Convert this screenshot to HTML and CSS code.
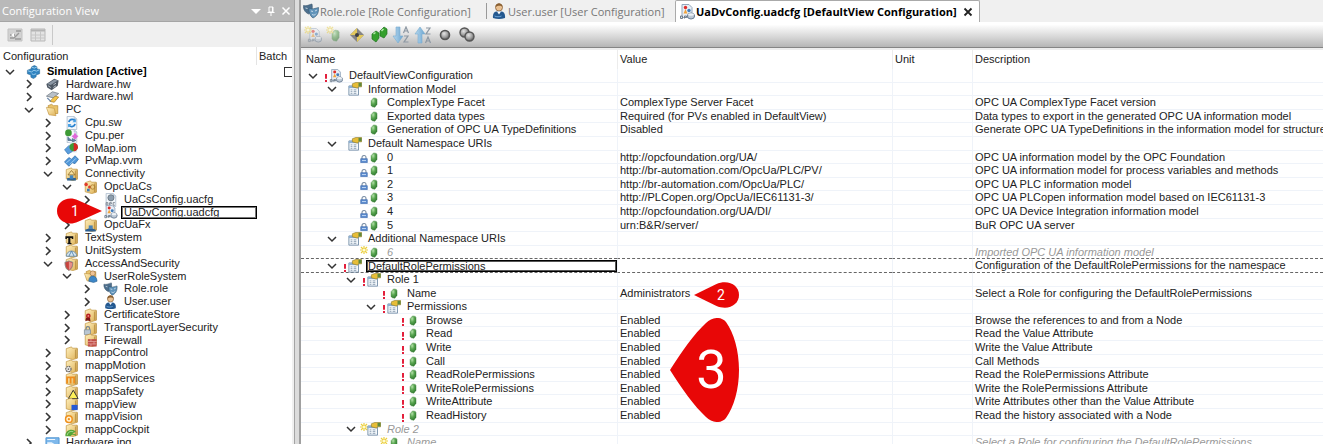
FILE: index.html
```html
<!DOCTYPE html>
<html lang="en">
<head>
<meta charset="utf-8">
<title>UaDvConfig.uadcfg [DefaultView Configuration]</title>
<link rel="stylesheet" href="styles.css">
</head>
<body>
<svg class="sprite" aria-hidden="true">
  <defs>
    <linearGradient id="gold" x1="0" y1="0" x2="1" y2="1"><stop offset="0" stop-color="#fff0bd"/><stop offset="1" stop-color="#dfb35a"/></linearGradient>
    <radialGradient id="green" cx=".35" cy=".3" r=".8"><stop offset="0" stop-color="#b4e0aa"/><stop offset=".45" stop-color="#58a64f"/><stop offset="1" stop-color="#286e2a"/></radialGradient>
    <radialGradient id="ball" cx=".4" cy=".35" r=".7"><stop offset="0" stop-color="#e4e4e4"/><stop offset=".55" stop-color="#a2a2a2"/><stop offset="1" stop-color="#555"/></radialGradient>
    <linearGradient id="arrow" x1="0" y1="0" x2="1" y2="0"><stop offset="0" stop-color="#b8daf0"/><stop offset="1" stop-color="#6ba4cf"/></linearGradient>
    <symbol id="down" viewBox="0 0 10 10"><path d="M1 3l4 4 4-4" fill="none" stroke="#333" stroke-width="1.5"/></symbol>
    <symbol id="right" viewBox="0 0 10 10"><path d="M3 1l4 4-4 4" fill="none" stroke="#333" stroke-width="1.6"/></symbol>
    <symbol id="folder" viewBox="0 0 16 16"><path d="M2 3l6-2 1 1.500h5.500V14l-5 1.500L2 13.500z" fill="url(#gold)" stroke="#c0933e" stroke-width=".8"/><path d="M12.500 4v10M14.500 3v11" stroke="#b48a3a" stroke-width=".9"/></symbol>
    <symbol id="open" viewBox="0 0 16 16"><path d="M3 3l4-1.500 2 1.500h5v9H4z" fill="#e9c36b" stroke="#b78b35" stroke-width=".8"/><path d="M1 5l9 1 2 8.500-8-1z" fill="url(#gold)" stroke="#c0933e" stroke-width=".7"/></symbol>
    <symbol id="cubes" viewBox="0 0 16 16"><path d="M6 2l3-1.500L12 2v2.500l3 .500v5l-4 1.500v2L8 15.500 5 14v-2.500L1 10V6l4-1.500z" fill="#2f83c0" stroke="#25628f" stroke-width=".6"/><path d="M6 2.500l3 1 3-1.300M1.500 6.500l4 1.500 3-2 3 1 3-1.500M6 10l2 1 3-1" stroke="#a4d4f1" fill="none"/></symbol>
    <symbol id="hw" viewBox="0 0 16 16"><path d="M1 8l9-6 5 2-1 6-7 5-5-3z" fill="#4d5763"/><path d="M2 8l8-5 4 1-8 5z" fill="#8b97a5"/><path d="M3 10l3 2M9 9l3-2M9 12l3-2" stroke="#c7cfd8"/></symbol>
    <symbol id="hwl" viewBox="0 0 16 16"><path d="M1 7l7-5 7 2-6 5z" fill="#b8c0c9" stroke="#6b7580" stroke-width=".8"/><path d="M5 13l6-6 4 1-5 6z" fill="#f5c64d" stroke="#a47823" stroke-width=".8"/><path d="M2 9l4 4" stroke="#6783a6" stroke-width="1.500"/></symbol>
    <symbol id="page" viewBox="0 0 16 16"><path d="M3 .5h8l3 3v12H3z" fill="#f3f7fb" stroke="#aab9cb" stroke-width=".9"/><path d="M11 .5v3h3" fill="#cfdcea" stroke="#aab9cb" stroke-width=".7"/></symbol>
    <symbol id="sw" viewBox="0 0 16 16"><use href="#page"/><path d="M5 7c1-4 6-4 7-1M12 9c-1 4-6 4-7 1" fill="none" stroke="#2781d0" stroke-width="2"/><path d="M13 3v4H9zM4 13V9h4z" fill="#4ba4e7"/></symbol>
    <symbol id="per" viewBox="0 0 16 16"><use href="#page"/><circle cx="4.500" cy="4.500" r="3.800" fill="#3e9a35"/><path d="M12 4l2 3 2 1-2 2-2 2-2-2-2-2 2-1z" fill="#df68d8"/><path d="M4 9v4h5M9 11l4 2-4 2z" stroke="#55738e" fill="#6788aa"/></symbol>
    <symbol id="iom" viewBox="0 0 16 16"><path d="M6 1h8v12H6z" fill="#dbe6f0"/><path d="M0 10l5-5 4 2v5l-5 3z" fill="#5a9ddd" stroke="#2c6ba8" stroke-width=".6"/><circle cx="10.500" cy="7" r="4.800" fill="#3e9a35"/><path d="M10.500 2.200a4.800 4.800 0 010 9.600z" fill="#d72626"/></symbol>
    <symbol id="vvm" viewBox="0 0 16 16"><path d="M0 9l5-5 3 2 4-4 4 4-4 5-3-1-4 4z" fill="#4f96d8" stroke="#2f6ca8" stroke-width=".8"/><path d="M2 10l5-4M6 12l7-7" stroke="#afd6f5"/></symbol>
    <symbol id="f-net" viewBox="0 0 16 16"><use href="#folder"/><path d="M4 9l4-5 4 5z" fill="#f6e1a0" stroke="#96722e"/><path d="M3 12.500h10v3H3z" fill="#2f6595"/><path d="M6 9.500h4v4H6z" fill="#4386bd"/></symbol>
    <symbol id="f-opc" viewBox="0 0 16 16"><use href="#folder"/><circle cx="3" cy="5" r="2" fill="#e03a2b"/><circle cx="7" cy="8" r="1.800" fill="#e03a2b"/><path d="M4 10h3v3H4z" fill="#3c79b8"/><circle cx="10.500" cy="8" r="2.500" fill="none" stroke="#ad8130"/></symbol>
    <symbol id="f-fx" viewBox="0 0 16 16"><use href="#folder"/><path d="M2 15.500v-2l4-1.500h4l4 1.500v2z" fill="#2c5f91"/><path d="M6 8.500h4.500v4H6z" fill="#4a82b5"/></symbol>
    <symbol id="cs" viewBox="0 0 16 16"><use href="#page"/><circle cx="8.500" cy="5.500" r="3.500" fill="#8c9dad" stroke="#66747f"/><path d="M3 11h2v3H3zM7 14v-3h2v1.500H7M13 11h-2v3h2" stroke="#757f89" fill="none"/></symbol>
    <symbol id="dv" viewBox="0 0 16 16"><path d="M3 .5h7l3 3v10H3z" fill="#e8eef5" stroke="#93a6bc"/><circle cx="6.500" cy="3.500" r="1.700" fill="#df2c29"/><path d="M4.500 9.500l2-4.500 2 4.500z" fill="#f1a33c"/><circle cx="10" cy="6.500" r="1.700" fill="#437db9"/><ellipse cx="12" cy="12" rx="3.600" ry="3" fill="#bcc8d5" stroke="#6a7d92"/><ellipse cx="12" cy="10.500" rx="3" ry="1.300" fill="#eef2f6"/><path d="M1.500 12h2v2.500h-2zM5.500 14.500V12h2v1.300h-2" stroke="#6f7d8a" fill="none"/></symbol>
    <symbol id="f-text" viewBox="0 0 16 16"><use href="#folder"/><path d="M1 6h9v3H8.500L8 8H6.700v5.500l1.300.5v1H3.300v-1l1-.5V8H3l-.500 1H1z" fill="#111"/></symbol>
    <symbol id="f-unit" viewBox="0 0 16 16"><use href="#folder"/><path d="M2 14a6 6 0 0112 0z" fill="#d4e4ee" stroke="#6e8aa0"/><path d="M5 14l3-6 3 6" fill="none" stroke="#4f83b0"/></symbol>
    <symbol id="f-sec" viewBox="0 0 16 16"><use href="#folder"/><path d="M.5 6l4.500-1.500L9.500 6c0 5-1 7-4.500 9.500C1.500 13 .5 11 .5 6z" fill="#c9433d" stroke="#8d8d8d"/><path d="M5 5.500V15C8.300 12 8.800 10 8.800 6.800z" fill="#e6908b"/></symbol>
    <symbol id="f-user" viewBox="0 0 16 16"><use href="#open"/><circle cx="10.500" cy="5" r="2.900" fill="#efc394" stroke="#8a5d30" stroke-width=".6"/><path d="M6 14c0-4 2-6 4.500-6s5 2 5 6l-4 1.500z" fill="#3d86c6" stroke="#275a88" stroke-width=".6"/></symbol>
    <symbol id="role" viewBox="0 0 16 16"><path d="M.5 2.500C4 3.500 6 1.500 9 1c1 5-.5 8-3.500 10C2 9.500 0 6 .5 2.500z" fill="#4d6f8d" stroke="#39546c" stroke-width=".6"/><path d="M6 5c3 1.500 6 .5 9.500-.5.5 6-2 9-5.500 10.500C7 13 5.500 9 6 5z" fill="#6194ba" stroke="#345570" stroke-width=".6"/><path d="M2.500 5l2 .5M8 8l2 .5M12 8l2-1M9 11.500c2 1 3 .5 4-.8" stroke="#dfeaf3" stroke-width=".8" fill="none"/></symbol>
    <symbol id="user" viewBox="0 0 16 16"><circle cx="8" cy="4.500" r="3.500" fill="#eac192" stroke="#7b522b" stroke-width=".7"/><path d="M4.500 4c0-5 7-5 7 0-2-2-5-1-7 0z" fill="#8a6032"/><path d="M2 15c-.5-4 1-6.500 4-6.500h4c3 0 4.500 2.500 4 6.500-4 1.300-8 1.300-12 0z" fill="#24588f"/><path d="M6 8.500l2 3 2-3z" fill="#fff"/><path d="M3.500 13c2 1 5 1 7 0" stroke="#6ba3d6" fill="none"/></symbol>
    <symbol id="f-cert" viewBox="0 0 16 16"><use href="#folder"/><circle cx="5.500" cy="9" r="2.700" fill="#b82020"/><path d="M3 11l-1 4 3-1 3 1.500-.5-4z" fill="#7d1717"/><circle cx="5.500" cy="9" r="1" fill="#ef8d83"/></symbol>
    <symbol id="f-tls" viewBox="0 0 16 16"><use href="#folder"/><path d="M3 10V8.500a2 2 0 014 0V10" fill="none" stroke="#75808a" stroke-width="1.300"/><path d="M1 10h7v5.500H1z" fill="#b9c6d2" stroke="#7b8995" stroke-width=".8"/></symbol>
    <symbol id="f-fire" viewBox="0 0 16 16"><use href="#folder"/><path d="M5 7h10v8.500H5z" fill="#c0504a"/><path d="M5 9.700h10M5 12.500h10M8.500 7v3M12 10v3M8.500 12.500v3" stroke="#e8aaa4" stroke-width=".8"/></symbol>
    <symbol id="f-motion" viewBox="0 0 16 16"><use href="#folder"/><circle cx="4.500" cy="11.500" r="3" fill="#eee" stroke="#666" stroke-width="1.400" stroke-dasharray="2 .8"/><circle cx="4.500" cy="11.500" r="1" fill="#666"/></symbol>
    <symbol id="f-serv" viewBox="0 0 16 16"><use href="#folder"/><path d="M3 13V6h8v7M7 6v7" fill="none" stroke="#ef8d1d" stroke-width="2"/></symbol>
    <symbol id="f-safe" viewBox="0 0 16 16"><use href="#folder"/><path d="M10 6l5.500 9.500h-11z" fill="#fff159" stroke="#333" stroke-width="1.100"/></symbol>
    <symbol id="f-view" viewBox="0 0 16 16"><use href="#folder"/><path d="M8 9h7v6H8z" fill="#2559d5"/></symbol>
    <symbol id="f-vis" viewBox="0 0 16 16"><use href="#folder"/><circle cx="5" cy="10.500" r="3.800" fill="#fff2d5" stroke="#ef911d" stroke-width="1.700"/><circle cx="5" cy="10.500" r="1.300" fill="#ef911d"/></symbol>
    <symbol id="f-cock" viewBox="0 0 16 16"><use href="#folder"/><path d="M1 15c0-8 9-9 12-5l-4 2 4 1v2c-2-2-5-2-6 0z" fill="#54a537"/><path d="M3 14c1-4 4-5 7-4" fill="none" stroke="#bde5a9"/></symbol>
    <symbol id="jpg" viewBox="0 0 16 16"><path d="M.5 2h15v12H.5z" fill="#7eb8eb" stroke="#4a91d0"/><path d="M2 7l5 0 6 4-11 2z" fill="#eaf5ff"/><path d="M2 4h9" stroke="#fff"/></symbol>
    <symbol id="group" viewBox="0 0 16 16"><path d="M1 4.500h11V15H1z" fill="#f4f8fc" stroke="#718ba6"/><path d="M1 4.500h11V7H1z" fill="#8fb0d2"/><path d="M3 9h2M3 11h2M3 13h2M6.500 9h3M6.500 11h3M6.500 13h3" stroke="#8598ac"/><path d="M5 2l4-1.500h6.500v5H12L11 7 5 5.500z" fill="#e7bd37" stroke="#8b792e" stroke-width=".7"/><path d="M12 1h3.500v4H12z" fill="#5f893e"/></symbol>
    <symbol id="pill" viewBox="0 0 8 12"><path d="M.8 4L3.500 1 6.500 1.500 7.300 3v5L5 11.200 2 10.700.8 9z" fill="url(#green)" stroke="#4c8f4a" stroke-width=".5" stroke-linejoin="round"/></symbol>
    <symbol id="lock" viewBox="0 0 8 8"><path d="M2 4V2.500a2 2 0 014 0V4" fill="none" stroke="#8496ab" stroke-width="1.200"/><path d="M.7 3.700h6.600v4H.7z" fill="#5c8ccf" stroke="#3b68aa" stroke-width=".6"/><path d="M2 5.500h4" stroke="#b9d2f0"/></symbol>
    <symbol id="bang" viewBox="0 0 8 8"><path d="M3 0h2v4.700H3zM3 6h2v2H3z" fill="#e3203c"/></symbol>
    <symbol id="star" viewBox="0 0 8 8"><path d="M4 0v8M0 4h8M1 1l6 6M7 1L1 7" stroke="#ebcf3e" stroke-width="1.200"/><circle cx="4" cy="4" r="1.500" fill="#fffbd0"/></symbol>
    <symbol id="t-adddv" viewBox="0 0 18 18"><use href="#dv" x="3" y="2" width="15" height="15"/><use href="#star" width="8" height="8"/></symbol>
    <symbol id="t-addpill" viewBox="0 0 18 18"><use href="#pill" x="5" y="3" width="9" height="13"/><use href="#star" width="8" height="8"/></symbol>
    <symbol id="t-diamond" viewBox="0 0 18 18"><path d="M9 2l7 7-7 7-7-7z" fill="#858585"/><path d="M9 2v7H2zM9 9h7l-7 7z" fill="#e3c95c"/><circle cx="9" cy="9" r="2" fill="#3e3e3e"/></symbol>
    <symbol id="t-pills" viewBox="0 0 18 18"><path d="M2 8l4-3 3 2v5l-3 4-4-3zM10 5l4-4 3 2v5l-3 4-4-2z" fill="#35a02d" stroke="#20731f" stroke-width=".7"/><path d="M3.500 8l2-1.500M11.500 5l2-2" stroke="#b6e8ac" stroke-width="1.500"/></symbol>
    <symbol id="t-down" viewBox="0 0 18 18"><path d="M4 1h4v9h3l-5 7-5-7h3z" fill="url(#arrow)" stroke="#79acd0" stroke-width=".6"/><path d="M11.500 7L14 1l2.500 6M12.300 5h3.400M12 10h4l-4 6h4.500" fill="none" stroke="#8d98a3" stroke-width="1.200"/></symbol>
    <symbol id="t-up" viewBox="0 0 18 18"><path d="M4 17h4V8h3L6 1 1 8h3z" fill="url(#arrow)" stroke="#79acd0" stroke-width=".6"/><path d="M12 2h4l-4 6h4.500M11.500 17l2.500-6 2.500 6M12.300 15h3.400" fill="none" stroke="#8d98a3" stroke-width="1.200"/></symbol>
    <symbol id="t-ball" viewBox="0 0 18 18"><circle cx="9" cy="9" r="4.500" fill="url(#ball)" stroke="#555" stroke-width="1.600"/></symbol>
    <symbol id="t-balls" viewBox="0 0 18 18"><circle cx="6.500" cy="6.500" r="4.500" fill="url(#ball)" stroke="#555" stroke-width="1.400"/><circle cx="11.500" cy="10.500" r="4.500" fill="url(#ball)" stroke="#555" stroke-width="1.400"/></symbol>
    <symbol id="t-tree" viewBox="0 0 18 18"><path d="M2 3h14v12H2z" fill="#d2d2d2" stroke="#c1c1c1"/><path d="M4 12h4l5-5M9 13h6M4 9h5M10 5h5" stroke="#999" stroke-width="1.300" fill="none"/><path d="M5 9l3-2v4z" fill="#fff"/></symbol>
    <symbol id="t-grid" viewBox="0 0 18 18"><path d="M2 3h14v12H2z" fill="#e3e3e3" stroke="#b7b7b7"/><path d="M2 4.500h14" stroke="#b4b4b4" stroke-width="2"/><path d="M2 9h14M2 12h14M6.500 5v10M11.500 5v10" stroke="#c6c6c6"/></symbol>
  </defs>
</svg>

<div class="workbench">
  <section class="side">
    <header class="side-title">
      <h1>Configuration View</h1>
      <button aria-label="Menu"><svg viewBox="0 0 10 10"><path d="M0 3h10L5 8z" fill="#fff"/></svg></button>
      <button aria-label="Pin"><svg viewBox="0 0 10 10"><path d="M3 1h4v5H3zM1.500 6.500h7M5 7v3M6.500 1v5" fill="none" stroke="#fff"/></svg></button>
      <button aria-label="Close"><svg viewBox="0 0 10 10"><path d="M1.500 1.500l7 7M8.500 1.500l-7 7" stroke="#fff" stroke-width="1.500"/></svg></button>
    </header>
    <div class="side-tools">
      <button aria-label="Tree view"><svg><use href="#t-tree"/></svg></button>
      <button aria-label="Table view"><svg><use href="#t-grid"/></svg></button>
    </div>
    <div class="side-head"><span>Configuration</span><label for="batch">Batch</label></div>
    <ul class="tree">
      <li class="l0"><button aria-label="Collapse"><svg><use href="#down"/></svg></button><svg class="ico"><use href="#cubes"/></svg><b>Simulation [Active]</b><input type="checkbox" id="batch"></li>
      <li class="l1"><button aria-label="Expand"><svg><use href="#right"/></svg></button><svg class="ico"><use href="#hw"/></svg><span>Hardware.hw</span></li>
      <li class="l1"><button aria-label="Expand"><svg><use href="#right"/></svg></button><svg class="ico"><use href="#hwl"/></svg><span>Hardware.hwl</span></li>
      <li class="l1"><button aria-label="Collapse"><svg><use href="#down"/></svg></button><svg class="ico"><use href="#open"/></svg><span>PC</span></li>
      <li class="l2"><button aria-label="Expand"><svg><use href="#right"/></svg></button><svg class="ico"><use href="#sw"/></svg><span>Cpu.sw</span></li>
      <li class="l2"><button aria-label="Expand"><svg><use href="#right"/></svg></button><svg class="ico"><use href="#per"/></svg><span>Cpu.per</span></li>
      <li class="l2"><button aria-label="Expand"><svg><use href="#right"/></svg></button><svg class="ico"><use href="#iom"/></svg><span>IoMap.iom</span></li>
      <li class="l2"><button aria-label="Expand"><svg><use href="#right"/></svg></button><svg class="ico"><use href="#vvm"/></svg><span>PvMap.vvm</span></li>
      <li class="l2"><button aria-label="Collapse"><svg><use href="#down"/></svg></button><svg class="ico"><use href="#f-net"/></svg><span>Connectivity</span></li>
      <li class="l3"><button aria-label="Collapse"><svg><use href="#down"/></svg></button><svg class="ico"><use href="#f-opc"/></svg><span>OpcUaCs</span></li>
      <li class="l4"><button aria-label="Expand"><svg><use href="#right"/></svg></button><svg class="ico"><use href="#cs"/></svg><span>UaCsConfig.uacfg</span></li>
      <li class="l4"><i class="gap"></i><svg class="ico"><use href="#dv"/></svg><span class="picked">UaDvConfig.uadcfg</span></li>
      <li class="l3"><button aria-label="Expand"><svg><use href="#right"/></svg></button><svg class="ico"><use href="#f-fx"/></svg><span>OpcUaFx</span></li>
      <li class="l2"><button aria-label="Expand"><svg><use href="#right"/></svg></button><svg class="ico"><use href="#f-text"/></svg><span>TextSystem</span></li>
      <li class="l2"><button aria-label="Expand"><svg><use href="#right"/></svg></button><svg class="ico"><use href="#f-unit"/></svg><span>UnitSystem</span></li>
      <li class="l2"><button aria-label="Collapse"><svg><use href="#down"/></svg></button><svg class="ico"><use href="#f-sec"/></svg><span>AccessAndSecurity</span></li>
      <li class="l3"><button aria-label="Collapse"><svg><use href="#down"/></svg></button><svg class="ico"><use href="#f-user"/></svg><span>UserRoleSystem</span></li>
      <li class="l4"><button aria-label="Expand"><svg><use href="#right"/></svg></button><svg class="ico"><use href="#role"/></svg><span>Role.role</span></li>
      <li class="l4"><button aria-label="Expand"><svg><use href="#right"/></svg></button><svg class="ico"><use href="#user"/></svg><span>User.user</span></li>
      <li class="l3"><button aria-label="Expand"><svg><use href="#right"/></svg></button><svg class="ico"><use href="#f-cert"/></svg><span>CertificateStore</span></li>
      <li class="l3"><button aria-label="Expand"><svg><use href="#right"/></svg></button><svg class="ico"><use href="#f-tls"/></svg><span>TransportLayerSecurity</span></li>
      <li class="l3"><button aria-label="Expand"><svg><use href="#right"/></svg></button><svg class="ico"><use href="#f-fire"/></svg><span>Firewall</span></li>
      <li class="l2"><button aria-label="Expand"><svg><use href="#right"/></svg></button><svg class="ico"><use href="#folder"/></svg><span>mappControl</span></li>
      <li class="l2"><button aria-label="Expand"><svg><use href="#right"/></svg></button><svg class="ico"><use href="#f-motion"/></svg><span>mappMotion</span></li>
      <li class="l2"><button aria-label="Expand"><svg><use href="#right"/></svg></button><svg class="ico"><use href="#f-serv"/></svg><span>mappServices</span></li>
      <li class="l2"><button aria-label="Expand"><svg><use href="#right"/></svg></button><svg class="ico"><use href="#f-safe"/></svg><span>mappSafety</span></li>
      <li class="l2"><button aria-label="Expand"><svg><use href="#right"/></svg></button><svg class="ico"><use href="#f-view"/></svg><span>mappView</span></li>
      <li class="l2"><button aria-label="Expand"><svg><use href="#right"/></svg></button><svg class="ico"><use href="#f-vis"/></svg><span>mappVision</span></li>
      <li class="l2"><button aria-label="Expand"><svg><use href="#right"/></svg></button><svg class="ico"><use href="#f-cock"/></svg><span>mappCockpit</span></li>
      <li class="l1"><button aria-label="Expand"><svg><use href="#right"/></svg></button><svg class="ico"><use href="#jpg"/></svg><span>Hardware.jpg</span></li>
    </ul>
  </section>

  <div class="splitter"></div>

  <main class="editor">
    <nav class="tabs">
      <a href="#role-tab" class="tab tab-role"><svg><use href="#role"/></svg>Role.role [Role Configuration]</a>
      <a href="#user-tab" class="tab tab-user"><svg><use href="#user"/></svg>User.user [User Configuration]</a>
      <div class="tab active"><svg><use href="#dv"/></svg><span>UaDvConfig.uadcfg [DefaultView Configuration]</span><button aria-label="Close tab"><svg viewBox="0 0 10 10"><path d="M1.500 1.500l7 7M8.500 1.500l-7 7" stroke="#222" stroke-width="1.800"/></svg></button></div>
    </nav>
    <div class="tools">
      <button class="dim" aria-label="Add configuration"><svg><use href="#t-adddv"/></svg></button>
      <button class="dim" aria-label="Add element"><svg><use href="#t-addpill"/></svg></button>
      <button aria-label="Mark"><svg><use href="#t-diamond"/></svg></button>
      <button aria-label="Elements"><svg><use href="#t-pills"/></svg></button>
      <button aria-label="Sort ascending"><svg><use href="#t-down"/></svg></button>
      <button aria-label="Sort descending"><svg><use href="#t-up"/></svg></button>
      <button aria-label="Single"><svg><use href="#t-ball"/></svg></button>
      <button aria-label="Multiple"><svg><use href="#t-balls"/></svg></button>
    </div>
    <table class="grid">
      <colgroup><col class="c-name"><col class="c-value"><col class="c-unit"><col></colgroup>
      <thead><tr><th>Name</th><th>Value</th><th>Unit</th><th>Description</th></tr></thead>
      <tbody>
        <tr><td><div class="node l0"><button aria-label="Collapse"><svg><use href="#down"/></svg></button><svg class="mark low"><use href="#bang"/></svg><svg class="ico"><use href="#dv"/></svg><span>DefaultViewConfiguration</span></div></td><td></td><td></td><td></td></tr>
        <tr><td><div class="node l1"><button aria-label="Collapse"><svg><use href="#down"/></svg></button><i class="mark"></i><svg class="ico"><use href="#group"/></svg><span>Information Model</span></div></td><td></td><td></td><td></td></tr>
        <tr><td><div class="node l2"><i class="gap"></i><i class="mark"></i><svg class="ico pill"><use href="#pill"/></svg><span>ComplexType Facet</span></div></td><td>ComplexType Server Facet</td><td></td><td>OPC UA ComplexType Facet version</td></tr>
        <tr><td><div class="node l2"><i class="gap"></i><i class="mark"></i><svg class="ico pill"><use href="#pill"/></svg><span>Exported data types</span></div></td><td>Required (for PVs enabled in DefaultView)</td><td></td><td>Data types to export in the generated OPC UA information model</td></tr>
        <tr><td><div class="node l2"><i class="gap"></i><i class="mark"></i><svg class="ico pill"><use href="#pill"/></svg><span>Generation of OPC UA TypeDefinitions</span></div></td><td>Disabled</td><td></td><td>Generate OPC UA TypeDefinitions in the information model for structured v</td></tr>
        <tr><td><div class="node l1"><button aria-label="Collapse"><svg><use href="#down"/></svg></button><i class="mark"></i><svg class="ico"><use href="#group"/></svg><span>Default Namespace URIs</span></div></td><td></td><td></td><td></td></tr>
        <tr><td><div class="node l2"><i class="gap"></i><svg class="mark low"><use href="#lock"/></svg><svg class="ico pill"><use href="#pill"/></svg><span>0</span></div></td><td>http://opcfoundation.org/UA/</td><td></td><td>OPC UA information model by the OPC Foundation</td></tr>
        <tr><td><div class="node l2"><i class="gap"></i><svg class="mark low"><use href="#lock"/></svg><svg class="ico pill"><use href="#pill"/></svg><span>1</span></div></td><td>http://br-automation.com/OpcUa/PLC/PV/</td><td></td><td>OPC UA information model for process variables and methods</td></tr>
        <tr><td><div class="node l2"><i class="gap"></i><svg class="mark low"><use href="#lock"/></svg><svg class="ico pill"><use href="#pill"/></svg><span>2</span></div></td><td>http://br-automation.com/OpcUa/PLC/</td><td></td><td>OPC UA PLC information model</td></tr>
        <tr><td><div class="node l2"><i class="gap"></i><svg class="mark low"><use href="#lock"/></svg><svg class="ico pill"><use href="#pill"/></svg><span>3</span></div></td><td>http://PLCopen.org/OpcUa/IEC61131-3/</td><td></td><td>OPC UA PLCopen information model based on IEC61131-3</td></tr>
        <tr><td><div class="node l2"><i class="gap"></i><svg class="mark low"><use href="#lock"/></svg><svg class="ico pill"><use href="#pill"/></svg><span>4</span></div></td><td>http://opcfoundation.org/UA/DI/</td><td></td><td>OPC UA Device Integration information model</td></tr>
        <tr><td><div class="node l2"><i class="gap"></i><svg class="mark low"><use href="#lock"/></svg><svg class="ico pill"><use href="#pill"/></svg><span>5</span></div></td><td>urn:B&amp;R/server/</td><td></td><td>BuR OPC UA server</td></tr>
        <tr><td><div class="node l1"><button aria-label="Collapse"><svg><use href="#down"/></svg></button><i class="mark"></i><svg class="ico"><use href="#group"/></svg><span>Additional Namespace URIs</span></div></td><td></td><td></td><td></td></tr>
        <tr class="draft"><td><div class="node l2"><i class="gap"></i><svg class="mark high"><use href="#star"/></svg><svg class="ico pill"><use href="#pill"/></svg><span>6</span></div></td><td></td><td></td><td>Imported OPC UA information model</td></tr>
        <tr class="focus"><td><div class="node l1"><button aria-label="Collapse"><svg><use href="#down"/></svg></button><svg class="mark low"><use href="#bang"/></svg><svg class="ico"><use href="#group"/></svg><span class="picked">DefaultRolePermissions</span></div></td><td></td><td></td><td>Configuration of the DefaultRolePermissions for the namespace</td></tr>
        <tr><td><div class="node l2"><button aria-label="Collapse"><svg><use href="#down"/></svg></button><svg class="mark low"><use href="#bang"/></svg><svg class="ico"><use href="#group"/></svg><span>Role 1</span></div></td><td></td><td></td><td></td></tr>
        <tr><td><div class="node l3"><i class="gap"></i><svg class="mark low"><use href="#bang"/></svg><svg class="ico pill"><use href="#pill"/></svg><span>Name</span></div></td><td>Administrators</td><td></td><td>Select a Role for configuring the DefaultRolePermissions</td></tr>
        <tr><td><div class="node l3"><button aria-label="Collapse"><svg><use href="#down"/></svg></button><svg class="mark low"><use href="#bang"/></svg><svg class="ico"><use href="#group"/></svg><span>Permissions</span></div></td><td></td><td></td><td></td></tr>
        <tr><td><div class="node l4"><i class="gap"></i><svg class="mark low"><use href="#bang"/></svg><svg class="ico pill"><use href="#pill"/></svg><span>Browse</span></div></td><td>Enabled</td><td></td><td>Browse the references to and from a Node</td></tr>
        <tr><td><div class="node l4"><i class="gap"></i><svg class="mark low"><use href="#bang"/></svg><svg class="ico pill"><use href="#pill"/></svg><span>Read</span></div></td><td>Enabled</td><td></td><td>Read the Value Attribute</td></tr>
        <tr><td><div class="node l4"><i class="gap"></i><svg class="mark low"><use href="#bang"/></svg><svg class="ico pill"><use href="#pill"/></svg><span>Write</span></div></td><td>Enabled</td><td></td><td>Write the Value Attribute</td></tr>
        <tr><td><div class="node l4"><i class="gap"></i><svg class="mark low"><use href="#bang"/></svg><svg class="ico pill"><use href="#pill"/></svg><span>Call</span></div></td><td>Enabled</td><td></td><td>Call Methods</td></tr>
        <tr><td><div class="node l4"><i class="gap"></i><svg class="mark low"><use href="#bang"/></svg><svg class="ico pill"><use href="#pill"/></svg><span>ReadRolePermissions</span></div></td><td>Enabled</td><td></td><td>Read the RolePermissions Attribute</td></tr>
        <tr><td><div class="node l4"><i class="gap"></i><svg class="mark low"><use href="#bang"/></svg><svg class="ico pill"><use href="#pill"/></svg><span>WriteRolePermissions</span></div></td><td>Enabled</td><td></td><td>Write the RolePermissions Attribute</td></tr>
        <tr><td><div class="node l4"><i class="gap"></i><svg class="mark low"><use href="#bang"/></svg><svg class="ico pill"><use href="#pill"/></svg><span>WriteAttribute</span></div></td><td>Enabled</td><td></td><td>Write Attributes other than the Value Attribute</td></tr>
        <tr><td><div class="node l4"><i class="gap"></i><svg class="mark low"><use href="#bang"/></svg><svg class="ico pill"><use href="#pill"/></svg><span>ReadHistory</span></div></td><td>Enabled</td><td></td><td>Read the history associated with a Node</td></tr>
        <tr class="draft"><td><div class="node l2"><button aria-label="Collapse"><svg><use href="#down"/></svg></button><svg class="mark high"><use href="#star"/></svg><svg class="ico"><use href="#group"/></svg><span>Role 2</span></div></td><td></td><td></td><td></td></tr>
        <tr class="draft"><td><div class="node l3"><i class="gap"></i><svg class="mark high"><use href="#star"/></svg><svg class="ico pill"><use href="#pill"/></svg><span>Name</span></div></td><td></td><td></td><td>Select a Role for configuring the DefaultRolePermissions</td></tr>
      </tbody>
    </table>
  </main>
</div>

<div class="callout one"><svg viewBox="0 0 45 26"><path d="M45 13L21 2.300C11-2.500 0 3 0 13s11 15.500 21 10.700z" fill="#e80707"/></svg><span>1</span></div>
<div class="callout two"><svg viewBox="0 0 45 26"><path d="M0 13L22 2.300C34-3 45 3 45 13s-11 16-23 10.700z" fill="#e80707"/></svg><span>2</span></div>
<div class="callout three"><svg viewBox="0 0 69 104"><path d="M0 52C12 33 24 16 36 5 42-1 51-2 56 4 64 15 69 33 69 52S64 89 56 100C51 106 42 105 36 99 24 88 12 71 0 52z" fill="#e80707"/></svg><span>3</span></div>
</body>
</html>
```
FILE: styles.css
```css
* { box-sizing: border-box; }
body {
  margin: 0;
  height: 100vh;
  overflow: hidden;
  background: #fff;
  color: #222;
  font: 11px/13px "Liberation Sans", Arial, sans-serif;
  white-space: nowrap;
}
.sprite { position: absolute; width: 0; height: 0; }
button { margin: 0; padding: 0; border: 0; background: none; display: flex; flex: none; }
svg { flex: none; display: block; }

.workbench { display: flex; height: 100%; }

/* Configuration tree */
.side { flex: none; width: 294px; display: flex; flex-direction: column; background: #f0f0f0; }
.side-title {
  display: flex; align-items: center; gap: 5px;
  height: 22px; padding: 0 3px 0 2px; flex: none;
  background: #b9b9b9; border-bottom: 1px solid #a5a5a5;
  font-family: "Open Sans", sans-serif; color: #fff;
}
.side-title h1 { margin: 0 auto 0 0; font-size: 11px; font-weight: 400; }
.side-title svg { width: 10px; height: 10px; }
.side-tools { display: flex; align-items: center; gap: 5px; height: 25px; padding-left: 6px; flex: none; }
.side-tools svg { width: 18px; height: 18px; }
.side-tools::after { content: ""; width: 1px; height: 20px; background: #c9c9c9; }
.side-head {
  display: flex; flex: none; height: 18px; line-height: 18px;
  margin-right: 2px; padding-left: 3px; background: #fff;
}
.side-head span { flex: 1; }
.side-head label { width: 36px; padding-left: 2px; border-left: 1px solid #e4e4e4; }
.tree { flex: 1; min-height: 0; overflow: hidden; list-style: none; margin: 0 2px 0 0; padding: 0; background: #fff; }
.tree li { display: flex; align-items: center; height: 13px; }
.tree li:nth-child(5n+2) { height: 12px; }
.tree button, .gap { width: 10px; height: 10px; margin-right: 11px; }
.tree button svg, .node button svg { width: 10px; height: 10px; }
.tree .ico { width: 15px; height: 14px; margin-right: 6px; }
.tree b { color: #000; }
.tree .l0 { padding-left: 5px; }
.tree .l1 { padding-left: 24px; }
.tree .l2 { padding-left: 43px; }
.tree .l3 { padding-left: 62px; }
.tree .l4 { padding-left: 82px; }
.tree .picked { width: 136px; height: 13px; line-height: 11px; margin-left: -3px; padding-left: 2px; border: 1px solid #000; outline: 1px solid #777; outline-offset: -2px; }
.tree input {
  appearance: none; width: 10px; height: 10px; margin: 0 -2px 0 auto;
  border: 1px solid #333; background: #fff;
}

.splitter { flex: none; width: 7px; background: #dcdcdc; border-left: 1px solid #a4a4a4; border-right: 2px solid #a0a0a0; }

/* Editor */
.editor { flex: 1; min-width: 0; overflow: hidden; }
.tabs {
  display: flex; height: 22px; background: #f0f0f0;
  font-family: "Open Sans", sans-serif; font-size: 11px;
}
.tab { display: flex; align-items: center; gap: 1px; color: #777; text-decoration: none; }
.tab svg { width: 16px; height: 16px; }
.tab-role { width: 185px; padding-left: 2px; }
.tab-user { width: 189px; padding-left: 4px; }
.tab-user::before { content: ""; width: 1px; height: 16px; margin-left: -4px; margin-right: 3px; background: #999; }
.tab.active {
  padding: 0 6px 0 3px; color: #000; font-weight: 700; background: #fff;
  border: 1px solid #aaa; border-bottom: 0; border-radius: 2px 2px 0 0;
}
.tab button { margin-left: 5px; }
.tab button svg { width: 10px; height: 10px; }
.tools {
  display: flex; align-items: center; gap: 4px; height: 26px; padding-left: 3px;
  background: linear-gradient(#fff 10%, #e3e3e3 45%, #b5b5b5);
  border-bottom: 1px solid #858585;
}
.tools svg { width: 18px; height: 18px; }
.tools .dim { opacity: .5; }

.grid { width: 100%; table-layout: fixed; border-collapse: separate; border-spacing: 0; border-top: 2px solid #ededed; }
.c-name { width: 316px; }
.c-value { width: 275px; }
.c-unit { width: 80px; }
.grid th { height: 19px; line-height: 19px; padding: 0 0 0 2px; text-align: left; font-weight: 400; border-left: 1px solid #ececec; }
.grid th:first-child { padding-left: 5px; border-left: 0; }
.grid td {
  height: 14px; line-height: 13px; padding: 0 0 0 2px;
  border-left: 1px solid #eff3f9; border-bottom: 1px solid #eff3f9;
}
.grid td:first-child { padding: 0; border-left: 0; }
.grid tr:nth-child(5n+2) td, .grid tr:nth-child(5n+4) td { height: 13px; line-height: 12px; }
.node { display: flex; align-items: center; height: 12px; }
.node button, .node .gap { width: 10px; height: 10px; margin-right: 4px; flex: none; }
.node .mark { width: 8px; height: 8px; flex: none; }
.node .low { align-self: flex-end; }
.node .high { align-self: flex-start; }
.node .ico { width: 14px; height: 14px; margin: 0 6px 0 -1px; }
.node .pill { height: 11px; }
.node.l0 { padding-left: 7px; }
.node.l1 { padding-left: 26px; }
.node.l2 { padding-left: 45px; }
.node.l3 { padding-left: 65px; }
.node.l4 { padding-left: 84px; }
.node .picked { flex: 1; height: 12px; line-height: 10px; margin-left: -2px; padding-left: 1px; border: 1px solid #000; outline: 1px solid #555; outline-offset: -2px; }
.draft td { color: #999; font-style: italic; }
.grid .focus td, .grid .draft:has(+ .focus) td { border-bottom: 1px dashed #666; }

/* Numbered callouts */
.callout { position: absolute; display: grid; place-items: center; color: #fff; font-family: Roboto, sans-serif; }
.callout svg { grid-area: 1 / 1; width: 100%; height: 100%; }
.callout span { grid-area: 1 / 1; z-index: 1; }
.one { left: 57px; top: 198px; width: 45px; height: 26px; font-size: 14px; }
.one span { padding-right: 9px; }
.two { left: 694px; top: 282px; width: 45px; height: 26px; font-size: 14px; }
.two span { padding-left: 9px; }
.three { left: 670px; top: 318px; width: 69px; height: 104px; font-size: 54px; line-height: 54px; }
.three span { padding-left: 14px; }
```
